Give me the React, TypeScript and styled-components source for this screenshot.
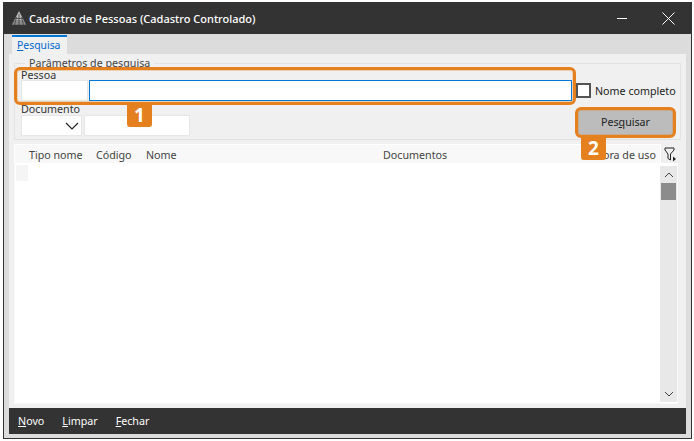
import React from "react";
import styled, { createGlobalStyle } from "styled-components";

const Global = createGlobalStyle`
  html, body { margin: 0; padding: 0; background: #fff; }
  body { font-family: "Noto Sans", "Open Sans", Arial, sans-serif; font-size: 10.7px; color: #222; }
`;
const Page = styled.div`
  width: 694px; height: 441px; box-sizing: border-box; padding: 2px 2px 2px 3px; position: relative; overflow: hidden;
`;
const Win = styled.div`
  height: 100%; box-sizing: border-box; border: 1px solid #333; border-top: 0; background: #dcdcdc;
  display: flex; flex-direction: column;
`;
const TitleBar = styled.div`
  height: 32px; flex: none; background: #333; display: flex; align-items: center; color: #fff; padding-left: 8px;
`;
const Title = styled.div`font-size: 11px; font-weight: 500; margin-left: 3px; white-space: nowrap;`;
const WinBtns = styled.div`margin-left: auto; display: flex; align-items: center; gap: 35px; padding-right: 16px;`;
const TabStrip = styled.div`height: 20px; flex: none; padding-left: 8px; display: flex; align-items: flex-end;`;
const Tab = styled.div`
  width: 55px; height: 19px; box-sizing: border-box; background: #f0f0f0; border-top: 2px solid #0078d7; color: #0066cc;
  padding-left: 5px; line-height: 16px; font-size: 10.4px;
  u { text-underline-offset: 1px; }
`;
const Panel = styled.div`
  margin: 0 5px; flex: 1; background: #f0f0f0; padding: 9px 5px 4px 5px; display: flex; flex-direction: column; min-height: 0;
`;
const Group = styled.div`
  height: 77px; flex: none; box-sizing: border-box; border: 1px solid #e3e3e3; position: relative;
`;
const Legend = styled.span`
  position: absolute; left: 10px; top: -8px; background: #f0f0f0; padding: 0 4px; line-height: 14px; color: #444;
`;
const Fields = styled.div`
  display: grid; grid-template-columns: 68px 483px auto; grid-template-rows: 15px 21px; padding: 1px 0 0 6px;
`;
const PersonLabel = styled.div`grid-column: 1 / 3; height: 15px; line-height: 20px; color: #333;`;
const DocLabel = styled.div`height: 14px; line-height: 16px; color: #333;`;
const Blank = styled.div`grid-column: 3;`;
const CodeInput = styled.div`background: #fff; border: 1px solid #e6e6e6; box-sizing: border-box; height: 21px; width: 67px;`;
const NameInput = styled.div`background: #fff; border: 1px solid #0078d7; box-sizing: border-box; height: 21px;`;
const Check = styled.div`display: flex; align-items: center; gap: 4px; padding-left: 4px; white-space: nowrap; color: #222; height: 21px;`;
const Box = styled.div`width: 15px; height: 15px; box-sizing: border-box; border: 2px solid #555; background: #fff; flex: none;`;
const DocRow = styled.div`display: flex; padding: 0 0 0 6px; align-items: flex-end;`;
const DocCol = styled.div`display: flex; flex-direction: column;`;
const DocFields = styled.div`display: flex; gap: 2px;`;
const Select = styled.div`
  width: 61px; height: 21px; background: #fff; border: 1px solid #e6e6e6; box-sizing: border-box; display: flex; align-items: center; justify-content: flex-end; padding-right: 2px;
`;
const DocInput = styled.div`width: 106px; height: 21px; background: #fff; border: 1px solid #e6e6e6; box-sizing: border-box;`;
const SearchBtn = styled.div`
  margin-left: auto; margin-right: 7px; width: 95px; height: 26px; background: #bcbcbc; text-align: center; line-height: 25px; color: #222;
`;
const GridWrap = styled.div`flex: 1; display: flex; flex-direction: column; margin-top: 4px; min-height: 0;`;
const HeadRow = styled.div`display: flex; height: 19px; flex: none; align-items: center;`;
const Head = styled.div`
  width: 647px; height: 19px; background: #f8f8f8; border: 1px solid #fff; border-bottom: 0; box-sizing: border-box; position: relative; line-height: 20px; color: #444; flex: none;
`;
const Col = styled.span<{ $x: number }>`position: absolute; left: ${p => p.$x}px; top: 0; white-space: nowrap;`;
const Body = styled.div`
  flex: 1; width: 664px; background: #fff; border: 1px solid #f8f8f8; border-top-color: #fff; box-sizing: border-box; display: flex; min-height: 0; padding: 1px 0 0 1px;
`;
const Gutter = styled.div`width: 12px; align-self: flex-start; height: 16px; background: #f5f5f5;`;
const Spacer = styled.div`flex: 1;`;
const ScrollBar = styled.div`width: 17px; background: #e8e8e8; display: flex; flex-direction: column; align-items: center; margin-top: 1px; margin-bottom: 1px;`;
const Arrow = styled.div`height: 17px; display: flex; align-items: center; justify-content: center; flex: none;`;
const Thumb = styled.div`width: 15px; height: 17px; background: #8c8c8c; flex: none;`;
const Footer = styled.div`
  flex: none; margin: 0 5px 4px; height: 26px; box-sizing: border-box; padding: 0 0 1px 9px; background: #333; color: #fff; display: flex; align-items: center; gap: 18px;
  u { text-underline-offset: 1px; }
`;
const Highlight = styled.div<{ $x: number; $y: number; $w: number; $h: number }>`
  position: absolute; left: ${p => p.$x}px; top: ${p => p.$y}px; width: ${p => p.$w}px; height: ${p => p.$h}px;
  box-sizing: border-box; border: 3px solid #e5801f; border-radius: 6px; pointer-events: none;
  box-shadow: inset 0 0 0 1px rgba(229, 128, 31, 0.3);
`;
const Badge = styled.div<{ $x: number; $y: number }>`
  position: absolute; left: ${p => p.$x}px; top: ${p => p.$y}px; width: 25px; height: 23px; background: #e5801f; color: #fff;
  font-family: "Open Sans", "Noto Sans", sans-serif; font-weight: 700; font-size: 19px; line-height: 22px; text-align: center; border-radius: 0 0 3px 3px;
`;

export default function App() {
  return (
    <Page>
      <Global />
      <Win>
        <TitleBar>
          <svg width="14" height="14" viewBox="0 0 14 14">
            <path d="M7 0 L0 13.5 H14 Z" fill="#bbb" />
            <path d="M7 3 V14 M4.5 6 L2.5 14 M9.5 6 L11.5 14 M1 10 H13 M3 7.5 H11 M0 12 H14" stroke="#333" strokeWidth="0.7" />
          </svg>
          <Title>Cadastro de Pessoas (Cadastro Controlado)</Title>
          <WinBtns>
            <svg width="10" height="11" viewBox="0 0 10 11"><path d="M0 5.5 H10" stroke="#fff" strokeWidth="1" /></svg>
            <svg width="13" height="13" viewBox="0 0 13 13"><path d="M.5.5 L12.5 12.5 M12.5.5 L.5 12.5" stroke="#fff" strokeWidth="1" /></svg>
          </WinBtns>
        </TitleBar>
        <TabStrip><Tab><u>P</u>esquisa</Tab></TabStrip>
        <Panel>
          <Group>
            <Legend>Parâmetros de pesquisa</Legend>
            <Fields>
              <PersonLabel>Pessoa</PersonLabel>
              <Blank />
              <CodeInput />
              <NameInput />
              <Check><Box />Nome completo</Check>
            </Fields>
            <DocRow>
              <DocCol>
                <DocLabel>Documento</DocLabel>
                <DocFields>
                  <Select>
                    <svg width="14" height="8" viewBox="0 0 14 8"><path d="M1 1 L7 7 L13 1" fill="none" stroke="#222" strokeWidth="1.2" /></svg>
                  </Select>
                  <DocInput />
                </DocFields>
              </DocCol>
              <SearchBtn>Pes<u>q</u>uisar</SearchBtn>
            </DocRow>
          </Group>
          <GridWrap>
            <HeadRow>
              <Head>
                <Col $x={14}>Tipo nome</Col>
                <Col $x={81}>Código</Col>
                <Col $x={131}>Nome</Col>
                <Col $x={368}>Documentos</Col>
                <Col $x={580}>Hora de uso</Col>
              </Head>
              <svg style={{ marginLeft: 3, marginTop: 2 }} width="13" height="15" viewBox="0 0 13 15">
                <path d="M1 1 H10 V3 L6.5 7 V13 L4 11.5 V7 L1 3 Z" fill="none" stroke="#222" strokeWidth="1" />
                <path d="M9 9.5 L12 12 L9 14.5 Z" fill="#222" />
              </svg>
            </HeadRow>
            <Body>
              <Gutter />
              <Spacer />
              <ScrollBar>
                <Arrow><svg width="10" height="6" viewBox="0 0 10 6"><path d="M1 5 L5 1 L9 5" fill="none" stroke="#444" strokeWidth="1" /></svg></Arrow>
                <Thumb />
                <Spacer />
                <Arrow><svg width="10" height="6" viewBox="0 0 10 6"><path d="M1 1 L5 5 L9 1" fill="none" stroke="#444" strokeWidth="1" /></svg></Arrow>
              </ScrollBar>
            </Body>
          </GridWrap>
        </Panel>
        <Footer>
          <span><u>N</u>ovo</span>
          <span><u>L</u>impar</span>
          <span><u>F</u>echar</span>
        </Footer>
      </Win>
      <Highlight $x={14} $y={67} $w={562} $h={38} />
      <Badge $x={127} $y={104}>1</Badge>
      <Highlight $x={575} $y={107} $w={101} $h={31} />
      <Badge $x={581} $y={137}>2</Badge>
    </Page>
  );
}
